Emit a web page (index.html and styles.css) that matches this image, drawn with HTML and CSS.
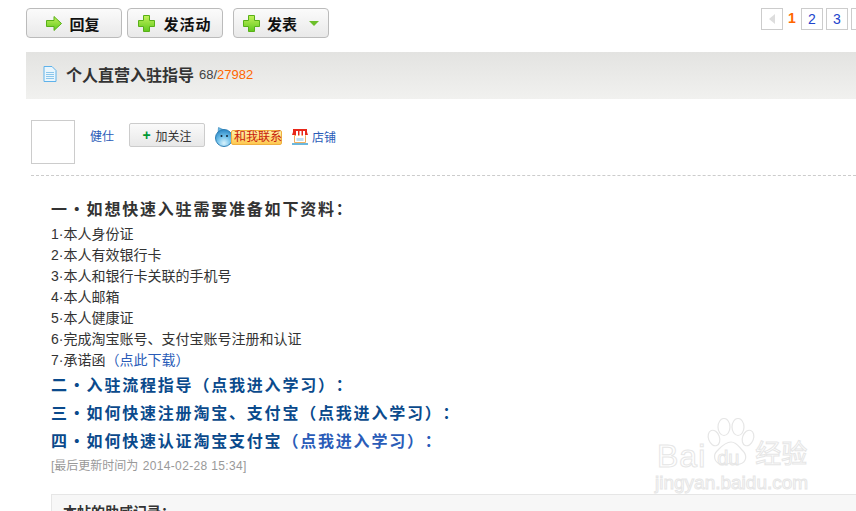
FILE: index.html
```html
<!DOCTYPE html>
<html lang="zh-CN">
<head>
  <meta charset="UTF-8">
  <title>个人直营入驻指导</title>
  <link rel="stylesheet" href="styles.css">
</head>
<body>
  <svg class="defs" width="0" height="0">
    <defs>
      <linearGradient id="green" x1="0" y1="0" x2="0" y2="1">
        <stop offset="0" stop-color="#c4f25a"/>
        <stop offset="1" stop-color="#5fc81e"/>
      </linearGradient>
      <radialGradient id="orb" cx="0.5" cy="0.8" r="0.8">
        <stop offset="0" stop-color="#d8f2fc"/>
        <stop offset="0.5" stop-color="#6fc0ea"/>
        <stop offset="1" stop-color="#2a86c4"/>
      </radialGradient>
    </defs>
  </svg>

  <div class="page">
    <div class="toolbar">
      <a class="btn btn-reply">
        <svg class="btn-icon" width="16" height="15" viewBox="0 0 16 15"><path d="M.5 4.500h7.500V.5L15.500 7.500 8 14.500v-4H.5z" fill="url(#green)" stroke="#58b018"/></svg>
        回复
      </a>
      <a class="btn btn-wide">
        <svg class="btn-icon" width="17" height="17" viewBox="0 0 17 17"><path d="M5.500.5h6v5h5v6h-5v5h-6v-5h-5v-6h5z" fill="url(#green)" stroke="#58b018"/></svg>
        发活动
      </a>
      <a class="btn btn-post">
        <svg class="btn-icon" width="17" height="17" viewBox="0 0 17 17"><path d="M5.500.5h6v5h5v6h-5v5h-6v-5h-5v-6h5z" fill="url(#green)" stroke="#58b018"/></svg>
        发表
        <span class="caret"></span>
      </a>
      <div class="pager">
        <span class="pg pg-prev"><span class="prev-arrow"></span></span>
        <span class="pg-cur">1</span>
        <a class="pg">2</a>
        <a class="pg">3</a>
        <a class="pg pg-next"></a>
      </div>
    </div>

    <div class="title-bar">
      <svg width="14" height="16" viewBox="0 0 14 16"><path d="M1 .5h8l4 4v11H1z" fill="#eaf6fd" stroke="#5fb2ea"/><path d="M3 6.500h8M3 8.500h8M3 10.500h8M3 12.500h8" stroke="#8cc6ea"/></svg>
      <h1>个人直营入驻指导</h1>
      <span class="count">68/<em>27982</em></span>
    </div>

    <div class="author">
      <div class="avatar"></div>
      <a class="author-name">健仕</a>
      <a class="follow"><b>+</b>加关注</a>
      <a class="contact">
        <svg class="contact-face" width="18" height="20" viewBox="0 0 18 20"><path d="M3 6L3.500 .5 9 3z" fill="#6dbbe6" stroke="#2d7fb5" stroke-width=".6"/><circle cx="9" cy="11" r="8.500" fill="url(#orb)" stroke="#2d7fb5"/><circle cx="6.500" cy="9" r="1" fill="#123"/><circle cx="12" cy="9" r="1" fill="#123"/></svg>
        <span class="contact-label">和我联系</span>
      </a>
      <a class="shop">
        <svg width="16" height="16" viewBox="0 0 16 16"><path d="M2.500 6.500h11v7h-11z" fill="#fff" stroke="#f0b060"/><path d="M4.500 9h7v3h-7z" fill="#bfe0f2"/><path d="M1 0h14v3l1 3H0l1-3z" fill="#e8281a"/><path d="M4 2h2v5H4zM7.500 2h2v5h-2zM11 2h2v5h-2z" fill="#fff"/><path d="M0 14h16v2H0z" fill="#6bb7dd"/></svg>
        店铺
      </a>
    </div>

    <div class="content">
      <h3 class="lead">一・如想快速入驻需要准备如下资料：</h3>
      <ul class="docs">
        <li>1·本人身份证</li>
        <li>2·本人有效银行卡</li>
        <li>3·本人和银行卡关联的手机号</li>
        <li>4·本人邮箱</li>
        <li>5·本人健康证</li>
        <li>6·完成淘宝账号、支付宝账号注册和认证</li>
        <li>7·承诺函<a>（点此下载）</a></li>
      </ul>
      <h3 class="step">二・入驻流程指导（点我进入学习）：</h3>
      <h3 class="step">三・如何快速注册淘宝、支付宝（点我进入学习）：</h3>
      <h3 class="step">四・如何快速认证淘宝支付宝<a>（点我进入学习）：</a></h3>
      <p class="updated">[最后更新时间为 <span class="updated-time">2014-02-28 15:34</span>]</p>
      <div class="cheer">本帖的助威记录：</div>
    </div>
  </div>

  <div class="watermark">
    <svg class="paw" width="48" height="50" viewBox="0 0 48 50" fill="#fff" stroke="#e6e6e6" stroke-width="1.200">
      <ellipse cx="7" cy="20" rx="5.500" ry="8" transform="rotate(-20 7 20)"/>
      <ellipse cx="17" cy="9" rx="6" ry="8.500"/>
      <ellipse cx="31" cy="9" rx="6" ry="8.500"/>
      <ellipse cx="41" cy="20" rx="5.500" ry="8" transform="rotate(20 41 20)"/>
      <path d="M24 24c6 0 8 5 12 9s4 11-3 13-6-1-9-1-5 3-11 1-7-9-3-13 8-9 14-9z"/>
    </svg>
    <div class="wm-main"><span class="wm-bai">Bai</span><i>du</i><span class="wm-cn">经验</span></div>
    <div class="wm-url">jingyan.baidu.com</div>
  </div>
</body>
</html>
```

FILE: styles.css
```css
* {
  box-sizing: border-box;
}

body {
  margin: 0;
  height: 511px;
  overflow: hidden;
  background: #fff;
  font-family: "Liberation Sans", "Noto Sans CJK SC", sans-serif;
  font-size: 14px;
  color: #333;
  text-spacing-trim: space-all;
}

a {
  color: #2a5cb8;
  text-decoration: none;
}

.defs {
  position: absolute;
}

.page {
  padding: 8px 0 0 26px;
}

/* toolbar */
.toolbar {
  display: flex;
  align-items: flex-start;
  height: 44px;
}

.btn {
  display: flex;
  align-items: center;
  justify-content: center;
  gap: 7px;
  width: 96px;
  height: 30px;
  margin-right: 5px;
  border: 1px solid #bbb;
  border-radius: 4px;
  background: linear-gradient(#fbfbfb, #e9e9e9);
  color: #111;
  font-size: 15px;
  font-weight: bold;
}

.btn-reply {
  padding-right: 2px;
}

.btn-icon {
  flex: none;
}

.btn-wide {
  gap: 8px;
  letter-spacing: 1px;
  margin-right: 10px;
}

.caret {
  width: 0;
  height: 0;
  margin-left: 5px;
  border: 5px solid transparent;
  border-top: 5px solid #6cbf2a;
  border-bottom: 0;
}

.pager {
  display: flex;
  gap: 3px;
  margin-left: auto;
  margin-right: -17px;
  font-size: 14px;
}

.pg {
  display: flex;
  align-items: center;
  justify-content: center;
  width: 22px;
  height: 22px;
  border: 1px solid #ccc;
  color: #2244cc;
  font-family: "Liberation Sans", sans-serif;
}

.pg-cur {
  width: 12px;
  text-align: center;
  line-height: 21px;
  color: #f60;
  font-weight: bold;
}

.prev-arrow {
  width: 0;
  height: 0;
  border: 5px solid transparent;
  border-right: 6px solid #ddd;
  border-left: 0;
}

/* title */
.title-bar {
  display: flex;
  align-items: center;
  height: 47px;
  padding: 0 0 3px 17px;
  background: linear-gradient(#e3e3e1, #f1f1ef);
}

.title-bar h1 {
  margin: 0 0 0 9px;
  font-size: 16px;
  font-weight: bold;
  color: #333;
}

.count {
  margin-left: 5px;
  font-size: 13px;
  color: #444;
}

.count em {
  font-style: normal;
  color: #f60;
}

/* author row */
.author {
  display: flex;
  align-items: flex-start;
  height: 56px;
  margin: 21px 0 0 5px;
  border-bottom: 1px dashed #ccc;
}

.avatar {
  width: 44px;
  height: 44px;
  border: 1px solid #ccc;
}

.author-name {
  margin: 7px 0 0 15px;
  font-size: 12px;
}

.follow {
  display: flex;
  align-items: center;
  justify-content: center;
  width: 76px;
  height: 24px;
  margin: 3px 0 0 15px;
  border: 1px solid #ccc;
  border-radius: 2px;
  background: linear-gradient(#fafafa, #e8e8e8);
  color: #333;
  font-size: 12px;
}

.follow b {
  margin-right: 5px;
  color: #093;
  font-size: 14px;
}

.contact {
  display: flex;
  align-items: center;
  height: 20px;
  margin: 7px 0 0 10px;
}

.contact-label {
  width: 51px;
  height: 15px;
  margin-left: -2px;
  padding-left: 2px;
  border: 1px solid #f0b040;
  border-radius: 2px;
  background: linear-gradient(#fff2a8, #fdc850);
  color: #c8200c;
  font-size: 12px;
  line-height: 13px;
  white-space: nowrap;
}

.shop {
  display: flex;
  align-items: center;
  gap: 4px;
  margin: 8px 0 0 10px;
  font-size: 12px;
}

/* post body */
.content {
  padding: 22px 0 0 25px;
}

.lead {
  margin: 0 0 2px;
  font-size: 16px;
  line-height: 24px;
  letter-spacing: 1.800px;
  color: #333;
}

.docs {
  margin: 0;
  padding: 0;
  list-style: none;
  line-height: 21px;
}

.docs a {
  color: #2a5cb8;
}

.step {
  margin: 0;
  font-size: 16px;
  line-height: 28px;
  letter-spacing: 1.800px;
  color: #0a4a8c;
}

.docs + .step {
  margin-top: 1px;
}

.step a {
  color: #2a5cb8;
}

.updated {
  margin: 0;
  font-size: 12px;
  line-height: 20px;
  color: #999;
}

.updated-time {
  margin-left: 1px;
  letter-spacing: .35px;
}

.cheer {
  margin-top: 18px;
  height: 40px;
  padding: 6px 0 0 11px;
  border: 1px solid #e6e6e6;
  border-right: 0;
  background: #f7f7f7;
  font-weight: bold;
  color: #333;
}

/* watermark over the picture corner */
.watermark {
  position: absolute;
  left: 655px;
  top: 418px;
  width: 180px;
  color: transparent;
  -webkit-text-stroke: 1px #e6e6e6;
}

.paw {
  position: absolute;
  left: 52px;
  top: 0;
}

.wm-main {
  position: relative;
  display: flex;
  align-items: center;
  margin-top: 18px;
  font-size: 32px;
  line-height: 34px;
  font-family: "Liberation Sans", sans-serif;
}

.wm-bai {
  margin-left: 2px;
  letter-spacing: 1px;
}

.wm-main i {
  margin: 5px 6px 0 11px;
  width: 32px;
  font-style: normal;
  font-size: 20px;
}

.wm-cn {
  margin-top: -8px;
  font-size: 26px;
  font-family: "Noto Sans CJK SC", sans-serif;
}

.wm-url {
  position: relative;
  margin-top: -3px;
  font-size: 19px;
  line-height: 22px;
}
```
